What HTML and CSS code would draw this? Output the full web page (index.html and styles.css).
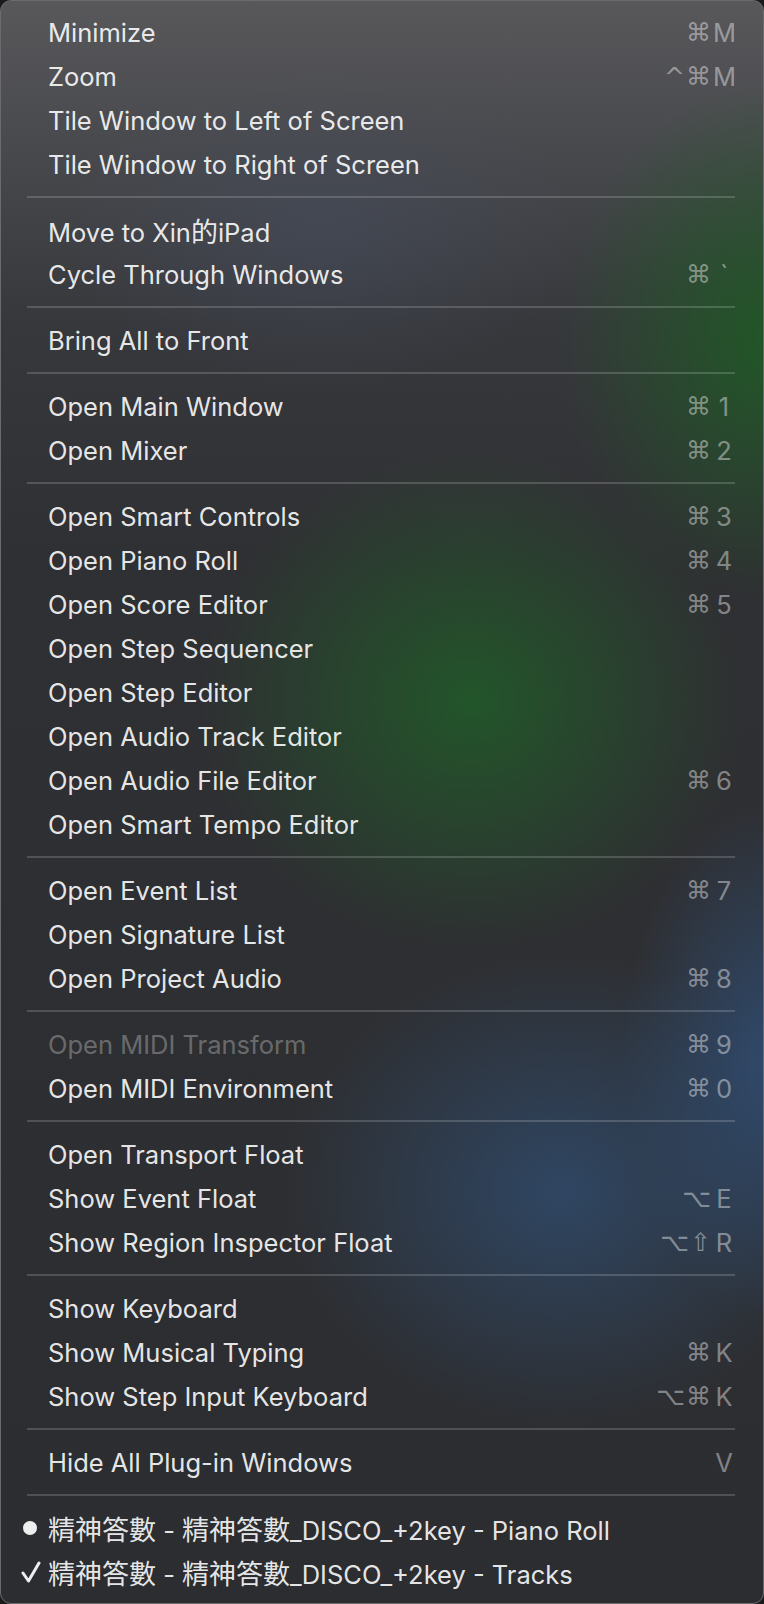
FILE: index.html
```html
<!DOCTYPE html>
<html>
<head>
<meta charset="utf-8">
<link rel="stylesheet" href="styles.css">
</head>
<body>
<div class="menu">
  <div class="item"><span class="mark"></span><span class="label">Minimize</span><span class="sc"><span class="mods">⌘</span><span class="key">M</span></span></div>
  <div class="item"><span class="mark"></span><span class="label">Zoom</span><span class="sc"><span class="mods">^⌘</span><span class="key">M</span></span></div>
  <div class="item"><span class="mark"></span><span class="label">Tile Window to Left of Screen</span></div>
  <div class="item"><span class="mark"></span><span class="label">Tile Window to Right of Screen</span></div>
  <div class="sep"></div>
  <div class="item"><span class="mark"></span><span class="label">Move to Xin<span class="cjk">的</span>iPad</span></div>
  <div class="item"><span class="mark"></span><span class="label">Cycle Through Windows</span><span class="sc"><span class="mods">⌘</span><span class="key">`</span></span></div>
  <div class="sep"></div>
  <div class="item"><span class="mark"></span><span class="label">Bring All to Front</span></div>
  <div class="sep"></div>
  <div class="item"><span class="mark"></span><span class="label">Open Main Window</span><span class="sc"><span class="mods">⌘</span><span class="key">1</span></span></div>
  <div class="item"><span class="mark"></span><span class="label">Open Mixer</span><span class="sc"><span class="mods">⌘</span><span class="key">2</span></span></div>
  <div class="sep"></div>
  <div class="item"><span class="mark"></span><span class="label">Open Smart Controls</span><span class="sc"><span class="mods">⌘</span><span class="key">3</span></span></div>
  <div class="item"><span class="mark"></span><span class="label">Open Piano Roll</span><span class="sc"><span class="mods">⌘</span><span class="key">4</span></span></div>
  <div class="item"><span class="mark"></span><span class="label">Open Score Editor</span><span class="sc"><span class="mods">⌘</span><span class="key">5</span></span></div>
  <div class="item"><span class="mark"></span><span class="label">Open Step Sequencer</span></div>
  <div class="item"><span class="mark"></span><span class="label">Open Step Editor</span></div>
  <div class="item"><span class="mark"></span><span class="label">Open Audio Track Editor</span></div>
  <div class="item"><span class="mark"></span><span class="label">Open Audio File Editor</span><span class="sc"><span class="mods">⌘</span><span class="key">6</span></span></div>
  <div class="item"><span class="mark"></span><span class="label">Open Smart Tempo Editor</span></div>
  <div class="sep"></div>
  <div class="item"><span class="mark"></span><span class="label">Open Event List</span><span class="sc"><span class="mods">⌘</span><span class="key">7</span></span></div>
  <div class="item"><span class="mark"></span><span class="label">Open Signature List</span></div>
  <div class="item"><span class="mark"></span><span class="label">Open Project Audio</span><span class="sc"><span class="mods">⌘</span><span class="key">8</span></span></div>
  <div class="sep"></div>
  <div class="item disabled"><span class="mark"></span><span class="label">Open MIDI Transform</span><span class="sc"><span class="mods">⌘</span><span class="key">9</span></span></div>
  <div class="item"><span class="mark"></span><span class="label">Open MIDI Environment</span><span class="sc"><span class="mods">⌘</span><span class="key">0</span></span></div>
  <div class="sep"></div>
  <div class="item"><span class="mark"></span><span class="label">Open Transport Float</span></div>
  <div class="item"><span class="mark"></span><span class="label">Show Event Float</span><span class="sc"><span class="mods">⌥</span><span class="key">E</span></span></div>
  <div class="item"><span class="mark"></span><span class="label">Show Region Inspector Float</span><span class="sc"><span class="mods">⌥⇧</span><span class="key">R</span></span></div>
  <div class="sep"></div>
  <div class="item"><span class="mark"></span><span class="label">Show Keyboard</span></div>
  <div class="item"><span class="mark"></span><span class="label">Show Musical Typing</span><span class="sc"><span class="mods">⌘</span><span class="key">K</span></span></div>
  <div class="item"><span class="mark"></span><span class="label">Show Step Input Keyboard</span><span class="sc"><span class="mods">⌥⌘</span><span class="key">K</span></span></div>
  <div class="sep"></div>
  <div class="item"><span class="mark"></span><span class="label">Hide All Plug-in Windows</span><span class="sc"><span class="mods"></span><span class="key">V</span></span></div>
  <div class="sep"></div>
  <div class="item"><span class="mark"><span class="dot"></span></span><span class="label"><span class="cjk">精神答數</span> - <span class="cjk">精神答數</span>_DISCO_+2key - Piano Roll</span></div>
  <div class="item"><span class="mark"><svg class="check" width="20" height="24" viewBox="0 0 20 24"><polyline points="2,13 7.5,21 18,3" fill="none" stroke="rgba(255,255,255,0.92)" stroke-width="3" stroke-linecap="round" stroke-linejoin="round"/></svg></span><span class="label"><span class="cjk">精神答數</span> - <span class="cjk">精神答數</span>_DISCO_+2key - Tracks</span></div>
</div>
</body>
</html>
```

FILE: styles.css
```css
html, body {
  margin: 0;
  padding: 0;
  background: #1a1a1b;
}

.menu {
  box-sizing: border-box;
  width: 764px;
  height: 1604px;
  border: 1px solid #6b6b6e;
  border-radius: 11px;
  padding: 9px 0 10px 0;
  overflow: hidden;
  font-family: Inter, "Noto Sans CJK TC", "Liberation Sans", sans-serif;
  font-size: 25.5px;
  color: rgba(255, 255, 255, 0.9);
  background:
    radial-gradient(ellipse 270px 250px at 470px 700px, rgba(32, 92, 40, 0.85), rgba(32, 92, 40, 0) 100%),
    radial-gradient(ellipse 210px 260px at 770px 340px, rgba(30, 90, 36, 0.9), rgba(30, 90, 36, 0) 100%),
    radial-gradient(ellipse 280px 240px at 560px 1190px, rgba(48, 78, 115, 0.75), rgba(48, 78, 115, 0) 100%),
    radial-gradient(ellipse 150px 260px at 770px 1060px, rgba(48, 80, 122, 0.8), rgba(48, 80, 122, 0) 100%),
    radial-gradient(ellipse 260px 160px at 320px 230px, rgba(70, 78, 96, 0.5), rgba(70, 78, 96, 0) 100%),
    linear-gradient(to bottom, #58585b 0%, #47484c 10%, #37383c 20%, #2f3033 35%, #2c2d30 100%);
}

.item {
  display: flex;
  align-items: center;
  height: 44px;
  padding-right: 28px;
  white-space: nowrap;
}

.mark {
  width: 47px;
  flex: none;
  display: flex;
  align-items: center;
  justify-content: flex-start;
  box-sizing: border-box;
  padding-left: 20px;
}

.dot {
  width: 14px;
  height: 14px;
  border-radius: 50%;
  background: rgba(255, 255, 255, 0.92);
  margin-left: 2px;
}

.check {
  display: block;
}

.cjk {
  font-family: "Noto Sans CJK TC", sans-serif;
  font-size: 27px;
}

.label {
  flex: 1;
}

.disabled {
  color: rgba(255, 255, 255, 0.3);
}

.sc {
  display: flex;
  align-items: center;
  color: rgba(255, 255, 255, 0.42);
}

.mods {
  font-family: "DejaVu Sans", sans-serif;
  font-size: 25px;
  letter-spacing: 1px;
  text-align: right;
}

.key {
  width: 22px;
  text-align: center;
  margin-left: 1px;
}

.sep {
  height: 2px;
  margin: 10px 28px 10px 26px;
  background: rgba(255, 255, 255, 0.17);
}
```
